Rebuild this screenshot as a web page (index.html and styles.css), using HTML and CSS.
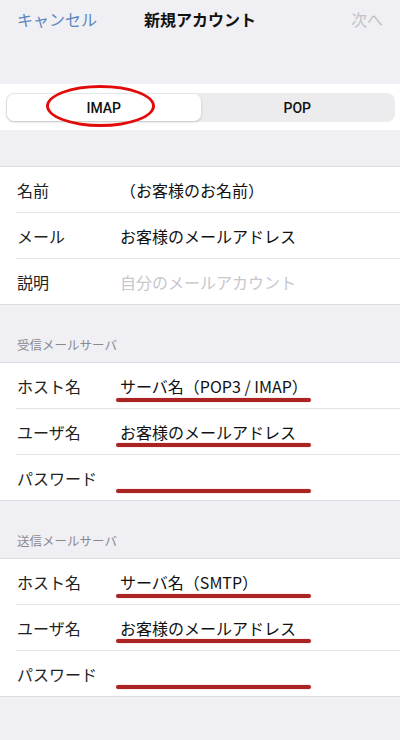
FILE: index.html
```html
<!DOCTYPE html>
<html lang="ja">
<head>
    <meta charset="UTF-8">
    <meta name="viewport" content="width=device-width, initial-scale=1.0">
    <title>新規アカウント</title>
    <link rel="stylesheet" href="styles.css">
</head>
<body>
    <header class="nav">
        <span class="nav-cancel">キャンセル</span>
        <span class="nav-title">新規アカウント</span>
        <span class="nav-next">次へ</span>
    </header>

    <div class="segment-strip">
        <div class="segment">
            <div class="segment-item selected">IMAP</div>
            <div class="segment-item">POP</div>
            <div class="circle"></div>
        </div>
    </div>

    <section class="group first">
        <div class="row">
            <span class="label">名前</span>
            <span class="value">（お客様のお名前）</span>
        </div>
        <div class="row">
            <span class="label">メール</span>
            <span class="value">お客様のメールアドレス</span>
        </div>
        <div class="row">
            <span class="label">説明</span>
            <span class="value placeholder">自分のメールアカウント</span>
        </div>
    </section>

    <div class="group-title">受信メールサーバ</div>
    <section class="group">
        <div class="row marked">
            <span class="label">ホスト名</span>
            <span class="value">サーバ名（POP3 / IMAP）</span>
        </div>
        <div class="row marked">
            <span class="label">ユーザ名</span>
            <span class="value">お客様のメールアドレス</span>
        </div>
        <div class="row marked">
            <span class="label">パスワード</span>
            <span class="value"></span>
        </div>
    </section>

    <div class="group-title">送信メールサーバ</div>
    <section class="group">
        <div class="row marked">
            <span class="label">ホスト名</span>
            <span class="value">サーバ名（SMTP）</span>
        </div>
        <div class="row marked">
            <span class="label">ユーザ名</span>
            <span class="value">お客様のメールアドレス</span>
        </div>
        <div class="row marked">
            <span class="label">パスワード</span>
            <span class="value"></span>
        </div>
    </section>
</body>
</html>
```

FILE: styles.css
```css
body, html {
    margin: 0;
    padding: 0;
    height: 100%;
    overflow: hidden;
    background: #efeff4;
    font-family: "Noto Sans CJK JP", "Noto Sans", sans-serif;
    color: #1c1c1e;
}

.nav {
    height: 38px;
    display: flex;
    align-items: center;
    justify-content: space-between;
    padding: 0 17px;
    font-size: 16px;
}

.nav-cancel {
    color: #5b87bd;
    width: 90px;
}

.nav-title {
    font-weight: bold;
    color: #111;
}

.nav-next {
    color: #c2c2c6;
    width: 90px;
    text-align: right;
}

.segment-strip {
    margin-top: 46px;
    background: #fff;
    padding: 9px 5px 8px 6px;
}

.segment {
    position: relative;
    display: flex;
    box-sizing: border-box;
    height: 29px;
    padding: 1px;
    border-radius: 8px;
    background: #ececee;
}

.segment-item {
    flex: 1;
    display: flex;
    align-items: center;
    justify-content: center;
    font-family: Roboto, "Liberation Sans", sans-serif;
    font-size: 14px;
    font-weight: 500;
    color: #111;
}

.segment-item.selected {
    background: #fff;
    border-radius: 7px;
    box-shadow: 0 1px 3px rgba(0, 0, 0, 0.18);
}

.circle {
    position: absolute;
    left: 40px;
    top: -8px;
    width: 103px;
    height: 36px;
    border: 3px solid #e30a0a;
    border-radius: 50%;
}

.group {
    background: #fff;
    border-top: 1px solid #dcdce0;
    border-bottom: 1px solid #dcdce0;
}

.group.first {
    margin-top: 36px;
}

.row {
    position: relative;
    display: flex;
    align-items: center;
    height: 45px;
    margin-left: 16px;
    font-size: 16px;
}

.row + .row {
    border-top: 1px solid #e3e3e6;
}

.label {
    width: 103px;
    padding-left: 1px;
    color: #222;
}

.value {
    color: #111;
}

.placeholder {
    color: #c7c7cc;
}

.row.marked::after {
    content: "";
    position: absolute;
    left: 100px;
    top: 35px;
    width: 195px;
    height: 4px;
    border-radius: 2px;
    background: #ab2424;
    box-shadow: 0 0 2px rgba(220, 60, 60, 0.35);
}

.row.marked + .row.marked::after {
    top: 34px;
}

.group-title {
    height: 57px;
    box-sizing: border-box;
    padding: 0 17px 8px;
    display: flex;
    align-items: flex-end;
    font-size: 12.5px;
    color: #8a8a8e;
}
```
